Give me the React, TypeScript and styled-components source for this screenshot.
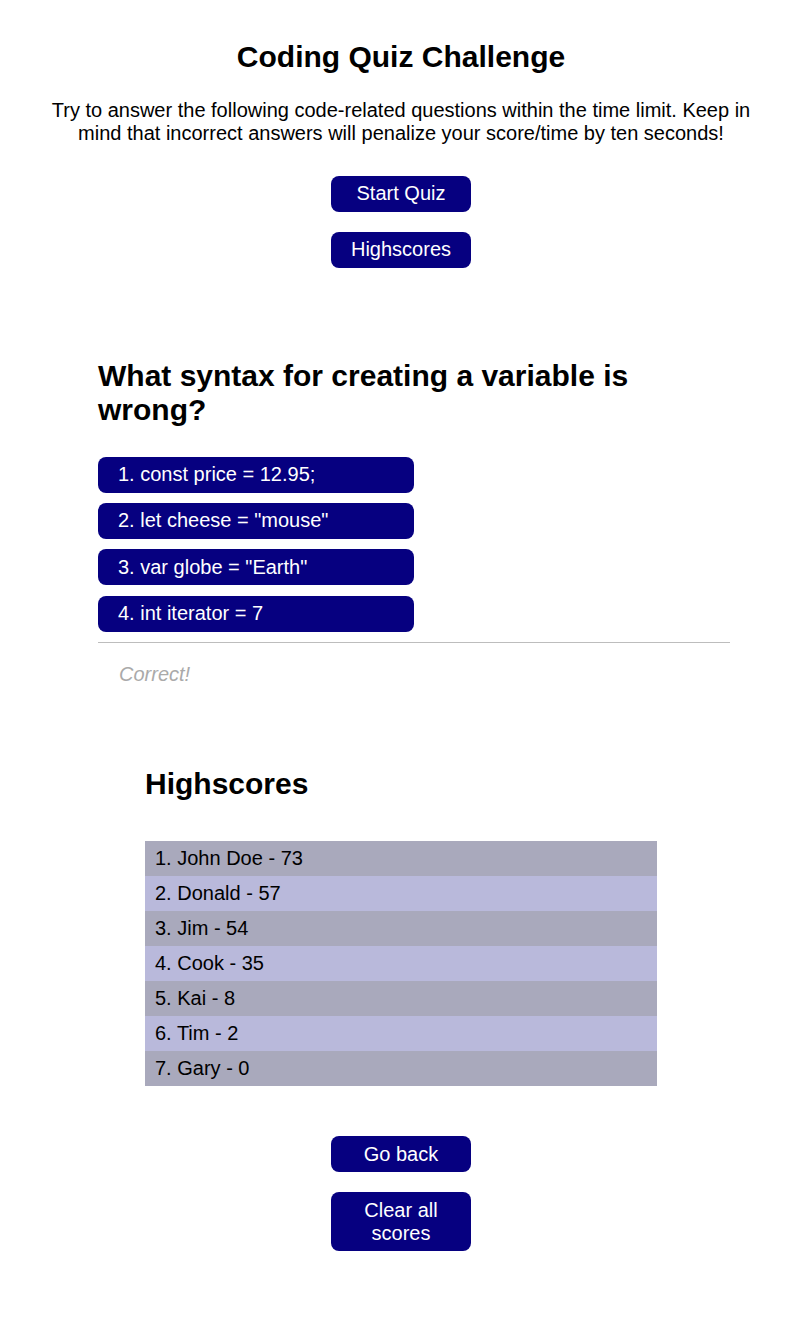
import * as React from 'react';
import styled, { createGlobalStyle } from 'styled-components';

const GlobalStyle = createGlobalStyle`
	body {
		margin: 0;
		background: #fff;
		color: #000;
		font-family: 'Liberation Sans', Arial, sans-serif;
		font-size: 20px;
	}
`;

const answers = [
	'1. const price = 12.95;',
	'2. let cheese = "mouse"',
	'3. var globe = "Earth"',
	'4. int iterator = 7'
];

const scores = [
	'1. John Doe - 73',
	'2. Donald - 57',
	'3. Jim - 54',
	'4. Cook - 35',
	'5. Kai - 8',
	'6. Tim - 2',
	'7. Gary - 0'
];

const App = () => {
	return (
		<>
			<GlobalStyle />
			<Page>
				<Intro>
					<Title>Coding Quiz Challenge</Title>
					<Lead>
						Try to answer the following code-related questions within the
						time limit. Keep in mind that incorrect answers will penalize
						your score/time by ten seconds!
					</Lead>
					<ButtonStack>
						<Button>Start Quiz</Button>
						<Button>Highscores</Button>
					</ButtonStack>
				</Intro>

				<Quiz>
					<Heading>What syntax for creating a variable is wrong?</Heading>
					<Answers>
						{answers.map(answer => (
							<Answer key={answer}>{answer}</Answer>
						))}
					</Answers>
					<Rule />
					<Feedback>Correct!</Feedback>
				</Quiz>

				<Scores>
					<Heading>Highscores</Heading>
					<ScoreList>
						{scores.map((score, i) => (
							<ScoreRow key={score} $odd={i % 2 === 0}>
								{score}
							</ScoreRow>
						))}
					</ScoreList>
					<ButtonStack>
						<Button>Go back</Button>
						<Button>Clear all scores</Button>
					</ButtonStack>
				</Scores>
			</Page>
		</>
	);
};

export default App;

const Page = styled.div`
	width: 802px;
	padding-bottom: 70px;
`;

const Intro = styled.section`
	display: flex;
	flex-direction: column;
	align-items: center;
	padding-top: 40px;
`;

const Title = styled.h1`
	margin: 0;
	font-size: 30px;
	font-weight: 700;
	line-height: 34.5px;
`;

const Lead = styled.p`
	margin: 24.5px 0 0;
	width: 710px;
	text-align: center;
	line-height: 23px;
`;

const ButtonStack = styled.div`
	display: flex;
	flex-direction: column;
	align-items: center;
	gap: 20px;
	margin-top: 30.5px;
`;

const Button = styled.button`
	width: 140px;
	padding: 6.5px 10px;
	border: none;
	border-radius: 8px;
	background: #060080;
	color: #fff;
	font-family: inherit;
	font-size: 20px;
	line-height: 23px;
	cursor: pointer;
`;

const Quiz = styled.section`
	margin: 91px 0 0 98px;
	width: 632px;
`;

const Heading = styled.h2`
	margin: 0;
	font-size: 30px;
	font-weight: 700;
	line-height: 34.5px;
`;

const Answers = styled.div`
	display: flex;
	flex-direction: column;
	align-items: flex-start;
	gap: 10.4px;
	margin-top: 29px;
`;

const Answer = styled.button`
	width: 316px;
	padding: 6.5px 20px;
	border: none;
	border-radius: 8px;
	background: #060080;
	color: #fff;
	text-align: left;
	font-family: inherit;
	font-size: 20px;
	line-height: 23px;
	cursor: pointer;
`;

const Rule = styled.hr`
	margin: 10.5px 0 0;
	border: none;
	border-top: 1px solid #bdbdbd;
`;

const Feedback = styled.p`
	margin: 20px 0 0 21px;
	color: #aaa;
	font-style: italic;
	line-height: 23px;
`;

const Scores = styled.section`
	margin: 80.5px auto 0;
	width: 512px;

	${ButtonStack} {
		margin-top: 50px;
	}
`;

const ScoreList = styled.ol`
	list-style: none;
	margin: 40px 0 0;
	padding: 0;
`;

const ScoreRow = styled.li<{ $odd: boolean }>`
	height: 35px;
	padding: 0 10px;
	display: flex;
	align-items: center;
	background: ${p => (p.$odd ? '#a9a9bc' : '#b9b9db')};
	line-height: 23px;
`;
